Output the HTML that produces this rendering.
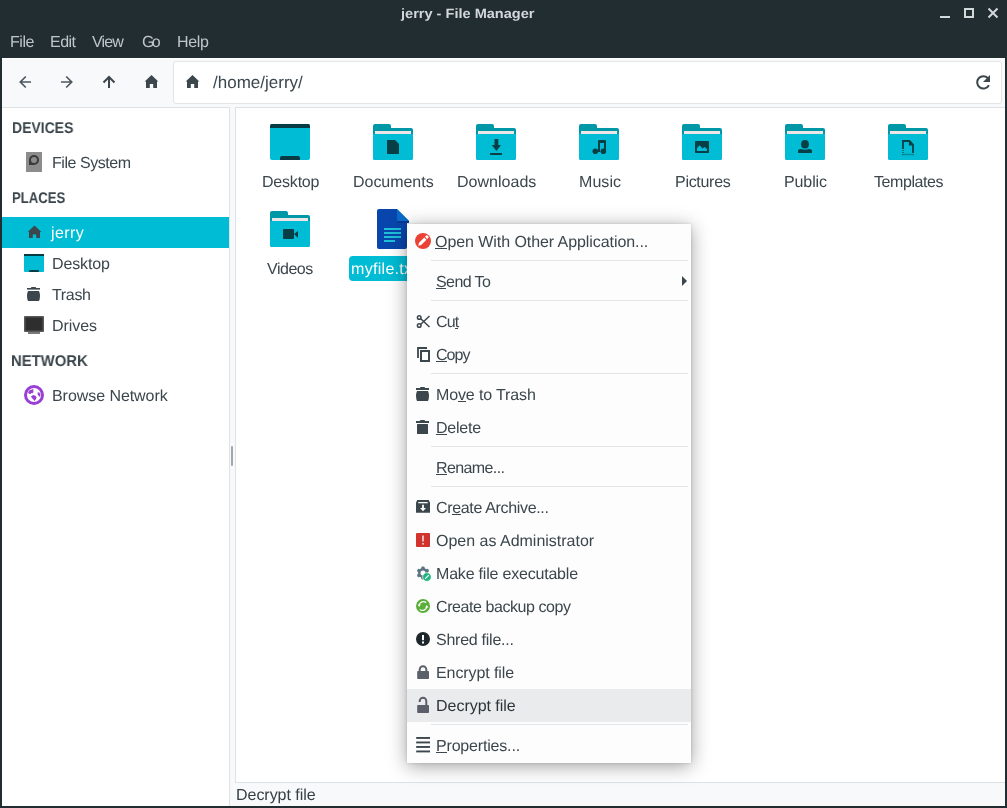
<!DOCTYPE html>
<html><head><meta charset="utf-8">
<style>
*{box-sizing:border-box;margin:0;padding:0}
html,body{width:1007px;height:808px;overflow:hidden;background:#222d32;font-family:"Liberation Sans",sans-serif;}
.t{will-change:transform;text-rendering:geometricPrecision}
.a{position:absolute}
.t{position:absolute;white-space:nowrap;line-height:20px;font-size:15px;color:#3b464d}
svg{position:absolute;overflow:visible}
u{text-decoration:none;border-bottom:1px solid currentColor;display:inline-block;line-height:11px}
</style></head><body>

<!-- title -->
<div class="t" style="left:400.69px;top:4px;font-size:13.5px;font-weight:700;color:#d3d8db;transform:scaleX(1.0784);transform-origin:0 0">jerry - File Manager</div>
<svg style="left:0;top:0" width="1007" height="30">
  <rect x="940" y="16" width="10" height="2" fill="#d3d8db"/>
  <rect x="965" y="9" width="8" height="8" fill="none" stroke="#d3d8db" stroke-width="2"/>
  <path d="M988.5 8.5 L997.5 17.5 M997.5 8.5 L988.5 17.5" stroke="#d3d8db" stroke-width="2"/>
</svg>

<!-- menubar -->
<div class="t" style="left:9.70px;top:33px;font-size:16px;color:#bfc6ca;letter-spacing:-0.460px">File</div>
<div class="t" style="left:49.70px;top:33px;font-size:16px;color:#bfc6ca;letter-spacing:-0.518px">Edit</div>
<div class="t" style="left:92.10px;top:33px;font-size:16px;color:#bfc6ca;letter-spacing:-0.838px">View</div>
<div class="t" style="left:141.80px;top:33px;font-size:16px;color:#bfc6ca;letter-spacing:-2.700px">Go</div>
<div class="t" style="left:176.80px;top:33px;font-size:16px;color:#bfc6ca;letter-spacing:-0.300px">Help</div>

<!-- toolbar -->
<div class="a" style="left:2px;top:58px;width:1003px;height:748px;background:#f8f9fa;border-top:1px solid #fff"></div>
<div class="a" style="left:173px;top:61px;width:829px;height:43px;background:#fff;border:1px solid #e4e6e6;border-radius:3px"></div>
<svg style="left:0;top:0" width="1007" height="110">
  <g stroke="#4d575d" stroke-width="1.7" fill="none">
    <path d="M31 82 H20.5 M25.8 76.5 L20.3 82 L25.8 87.5"/>
    <path d="M61 82 H71.5 M66.2 76.5 L71.7 82 L66.2 87.5"/>
  </g>
  <path d="M109 88 V77.5 M103.5 82.5 L109 77 L114.5 82.5" stroke="#3b464d" stroke-width="2" fill="none"/>
  <path d="M151.5 75 L158.3 81.5 H157 V88 H153.2 V84 H149.8 V88 H146 V81.5 H144.7 Z" fill="#3b464d"/>
  <path d="M192.5 75 L199.3 81.5 H198 V88 H194.2 V84 H190.8 V88 H187 V81.5 H185.7 Z" fill="#3b464d"/>
  <path d="M988.3 78.6 A6.2 6.2 0 1 0 988.9 85.2" stroke="#3b464d" stroke-width="2" fill="none"/>
  <path d="M990 75 V82 H983 Z" fill="#3b464d"/>
</svg>
<div class="t" style="left:213.04px;top:73px;font-size:17px;letter-spacing:0.007px">/home/jerry/</div>

<!-- sidebar -->
<div class="a" style="left:2px;top:107px;width:228px;height:699px;background:#fff;border-top:1px solid #dfe2e5;border-right:1px solid #dfe2e5"></div>
<div class="a" style="left:2px;top:217px;width:227px;height:31px;background:#00bcd4"></div>
<div class="t" style="left:11.50px;top:119px;font-size:15.5px;font-weight:700;color:#3a454b;transform:scaleX(0.9024);transform-origin:0 0">DEVICES</div>
<div class="t" style="left:51.53px;top:154px;font-size:16px;letter-spacing:-0.455px">File System</div>
<div class="t" style="left:11.53px;top:189px;font-size:15.5px;font-weight:700;color:#3a454b;transform:scaleX(0.8469);transform-origin:0 0">PLACES</div>
<div class="t" style="left:51.10px;top:224px;font-size:16px;color:#fff;letter-spacing:0.395px">jerry</div>
<div class="t" style="left:51.73px;top:255px;font-size:16px;letter-spacing:-0.124px">Desktop</div>
<div class="t" style="left:51.62px;top:286px;font-size:16px;letter-spacing:-0.323px">Trash</div>
<div class="t" style="left:51.73px;top:317px;font-size:16px;letter-spacing:-0.049px">Drives</div>
<div class="t" style="left:11.14px;top:352px;font-size:15.5px;font-weight:700;color:#3a454b;transform:scaleX(0.9571);transform-origin:0 0">NETWORK</div>
<div class="t" style="left:51.73px;top:387px;font-size:16px;letter-spacing:-0.059px">Browse Network</div>
<svg style="left:0;top:0" width="240" height="420">
  <!-- file system -->
  <rect x="26" y="152" width="16" height="20" fill="#8c8c8c"/>
  <path d="M29 160 A5 5 0 1 1 34 165 H29 Z" fill="#3a3a3a"/><circle cx="34" cy="160" r="3" fill="#8c8c8c"/>
  <!-- home -->
  <path d="M34.5 225.5 L41.3 232 H40 V238 H36.2 V234.5 H32.8 V238 H29 V232 H27.7 Z" fill="#3b464d"/>
  <!-- desktop -->
  <rect x="24" y="254" width="20" height="18" rx="1" fill="#00bcd4"/>
  <rect x="24" y="254" width="20" height="2" fill="#073c45"/>
  <rect x="29" y="270" width="10" height="2" rx="1" fill="#073c45"/>
  <!-- trash -->
  <rect x="27" y="288" width="13" height="1.6" fill="#3b464d"/>
  <rect x="31" y="287" width="5" height="1.5" rx="0.7" fill="#3b464d"/>
  <path d="M28 291 H39 Q41 296 39 301 H28 Q26 296 28 291 Z" fill="#3b464d"/>
  <!-- drives -->
  <rect x="24" y="316" width="20" height="16" rx="1" fill="#585858"/>
  <rect x="25.5" y="317.5" width="17" height="13" fill="#2e2e2e"/>
  <rect x="28" y="332" width="12" height="2" fill="#7a7a7a"/>
  <!-- globe -->
  <circle cx="34" cy="395" r="8.5" fill="#fff" stroke="#9a3fd5" stroke-width="3"/>
  <path d="M28 392.6 L29.5 390.3 L32 389.4 L33.4 389 L33.3 392.4 L32.4 393.3 L31.2 393 L30.8 394 L29 393.8 Z M31 396.2 L33.4 395 L35.8 396 L36.6 397.6 L35.8 399.4 L34.3 401 L33.4 399.4 L31.8 397.9 Z M37.6 392.6 L39 392.2 L40.4 394 L40.1 396.8 L38.9 396.2 L37.7 394.6 Z" fill="#9a3fd5"/>
</svg>

<!-- pane separator handle -->
<div class="a" style="left:231px;top:446px;width:2px;height:20px;background:#a2a7ab;border-radius:1px"></div>

<!-- main view -->
<div class="a" style="left:235px;top:107px;width:770px;height:676px;background:#fff;border-left:1px solid #dfe2e5;border-top:1px solid #dfe2e5;border-bottom:1px solid #dfe2e5"></div>

<svg style="left:0;top:0" width="1007" height="300">
  <defs>
    <g id="fold">
      <path d="M0 2 Q0 0 2 0 H16 Q18 0 18 2 V4 H38 Q40 4 40 6 V34 Q40 36 38 36 H2 Q0 36 0 34 Z" fill="#0097a7"/>
      <rect x="2" y="7" width="36" height="4" fill="#eee6e6"/>
      <path d="M0 10 H40 V34 Q40 36 38 36 H2 Q0 36 0 34 Z" fill="#00bcd4"/>
    </g>
  </defs>
  <!-- desktop -->
  <rect x="270" y="124" width="40" height="36" rx="2" fill="#00bcd4"/>
  <path d="M270 128 V126 Q270 124 272 124 H308 Q310 124 310 126 V128 Z" fill="#073c45"/>
  <path d="M280 160 V158 Q280 156 282 156 H298 Q300 156 300 158 V160 Z" fill="#073c45"/>
  <!-- documents -->
  <use href="#fold" x="373" y="124"/>
  <path d="M387 140 H395 L399 144 V154 H387 Z" fill="#073f47"/>
  <!-- downloads -->
  <use href="#fold" x="476" y="124"/>
  <path d="M494.5 139 H498.3 V145 H501 L496.4 151 L491.7 145 H494.5 Z" fill="#073f47"/>
  <rect x="490" y="153" width="12" height="2" fill="#073f47"/>
  <!-- music -->
  <use href="#fold" x="579" y="124"/>
  <path d="M598 152 V141 Q598 140 599 140 H605 Q606 140 606 141 V151 H604 V143 H600 V152 Z" fill="#073f47"/>
  <circle cx="595.3" cy="151.3" r="2.8" fill="#073f47"/><circle cx="603.3" cy="151.3" r="2.8" fill="#073f47"/>
  <!-- pictures -->
  <use href="#fold" x="682" y="124"/>
  <rect x="695" y="141" width="14" height="12" rx="0.8" fill="#073f47"/>
  <path d="M697 151 V148 L699.5 145.3 L702.5 148.5 L704.5 147 L707 149 V151 Z" fill="#00bcd4"/>
  <!-- public -->
  <use href="#fold" x="785" y="124"/>
  <ellipse cx="805" cy="144.3" rx="3.9" ry="4.3" fill="#073f47"/>
  <path d="M798 153 V151 Q798 149.2 801 149 Q805 150.5 809 149 Q812 149.2 812 151 V153 Z" fill="#073f47"/>
  <!-- templates -->
  <use href="#fold" x="888" y="124"/>
  <path d="M903 149 V141 H909.5 L913 144.5 V153" fill="none" stroke="#073f47" stroke-width="1.8"/>
  <path d="M909.5 141 V144.8 H913" fill="#073f47" stroke="#073f47" stroke-width="1.2"/>
  <path d="M903 150 V154.5 H913 V153" fill="none" stroke="#073f47" stroke-width="1.6" stroke-dasharray="1 1" opacity="0.75"/>
  <!-- videos -->
  <use href="#fold" x="270" y="211"/>
  <rect x="283" y="229" width="11" height="10" rx="1" fill="#073f47"/>
  <path d="M294 234 L298 231 V238 Z" fill="#073f47"/>
  <!-- myfile.txt -->
  <path d="M377 211 Q377 209 379 209 H397 L409 221 V223 H407 V247 Q407 249 405 249 H379 Q377 249 377 247 Z" fill="#0846ad"/>
  <rect x="397" y="221" width="12" height="2" fill="#073a94"/>
  <path d="M397 209 L409 221 H397 Z" fill="#0a6acb"/>
  <rect x="384" y="228" width="17" height="2" fill="#1ec0da"/>
  <rect x="384" y="232" width="17" height="2" fill="#1ec0da"/>
  <rect x="384" y="236" width="17" height="2" fill="#1ec0da"/>
  <rect x="384" y="240" width="11" height="2" fill="#1ec0da"/>
</svg>

<div class="t" style="left:262.03px;top:173px;font-size:16px;letter-spacing:-0.206px">Desktop</div>
<div class="t" style="left:353.43px;top:173px;font-size:16px;letter-spacing:-0.036px">Documents</div>
<div class="t" style="left:456.83px;top:173px;font-size:16px;letter-spacing:0.026px">Downloads</div>
<div class="t" style="left:578.93px;top:173px;font-size:16px;letter-spacing:0.061px">Music</div>
<div class="t" style="left:674.63px;top:173px;font-size:16px;letter-spacing:-0.293px">Pictures</div>
<div class="t" style="left:783.63px;top:173px;font-size:16px;letter-spacing:-0.109px">Public</div>
<div class="t" style="left:873.52px;top:173px;font-size:16px;letter-spacing:-0.437px">Templates</div>
<div class="t" style="left:266.57px;top:260px;font-size:16px;letter-spacing:-0.473px">Videos</div>
<div class="a" style="left:349px;top:256px;width:80px;height:25px;background:#00bcd4;border-radius:4px"></div>
<div class="t" style="left:350.60px;top:260px;font-size:16px;color:#fff;letter-spacing:0.300px">myfile.txt</div>

<!-- status bar -->
<div class="t" style="left:235.52px;top:786px;font-size:16px;color:#343e43;letter-spacing:-0.033px">Decrypt file</div>

<!-- context menu -->
<div class="a" style="left:407px;top:224px;width:284px;height:539px;background:#fdfdfd;box-shadow:0 3px 18px rgba(0,0,0,0.38), 0 0 3px rgba(0,0,0,0.15)"></div>
<div class="a" style="left:407px;top:689px;width:284px;height:33px;background:#e9ebed"></div>
<div class="a" style="left:431px;top:260px;width:257px;height:1px;background:#e3e5e8"></div>
<div class="a" style="left:431px;top:300px;width:257px;height:1px;background:#e3e5e8"></div>
<div class="a" style="left:431px;top:373px;width:257px;height:1px;background:#e3e5e8"></div>
<div class="a" style="left:431px;top:446px;width:257px;height:1px;background:#e3e5e8"></div>
<div class="a" style="left:431px;top:486px;width:257px;height:1px;background:#e3e5e8"></div>
<div class="a" style="left:431px;top:724px;width:257px;height:1px;background:#e3e5e8"></div>
<div class="t" style="left:435.40px;top:233px;font-size:16px;letter-spacing:-0.066px"><u>O</u>pen With Other Application...</div>
<div class="t" style="left:435.57px;top:273px;font-size:16px;letter-spacing:-0.601px"><u>S</u>end To</div>
<div class="t" style="left:436.10px;top:313px;font-size:16px;letter-spacing:-0.837px">Cu<u>t</u></div>
<div class="t" style="left:436.10px;top:346px;font-size:16px;letter-spacing:-0.956px"><u>C</u>opy</div>
<div class="t" style="left:436.10px;top:386px;font-size:16px;letter-spacing:-0.128px">Mo<u>v</u>e to Trash</div>
<div class="t" style="left:436.10px;top:419px;font-size:16px;letter-spacing:-0.238px"><u>D</u>elete</div>
<div class="t" style="left:435.90px;top:459px;font-size:16px;letter-spacing:-0.614px"><u>R</u>ename...</div>
<div class="t" style="left:436.10px;top:499px;font-size:16px;letter-spacing:-0.338px">Cr<u>e</u>ate Archive...</div>
<div class="t" style="left:435.70px;top:532px;font-size:16px;letter-spacing:-0.009px">Open as Administrator</div>
<div class="t" style="left:436.10px;top:565px;font-size:16px;letter-spacing:-0.199px">Make file executable</div>
<div class="t" style="left:436.10px;top:598px;font-size:16px;letter-spacing:-0.427px">Create backup copy</div>
<div class="t" style="left:436.07px;top:631px;font-size:16px;letter-spacing:-0.257px">Shred file...</div>
<div class="t" style="left:436.10px;top:664px;font-size:16px;letter-spacing:-0.095px">Encrypt file</div>
<div class="t" style="left:435.81px;top:697px;font-size:16px;color:#2b3439;letter-spacing:-0.025px">Decrypt file</div>
<div class="t" style="left:436.10px;top:737px;font-size:16px;letter-spacing:-0.181px"><u>P</u>roperties...</div>
<svg style="left:0;top:0" width="1007" height="808">
  <!-- open with: red circle with pencil -->
  <circle cx="423" cy="241" r="8" fill="#ea4335"/>
  <path d="M418.2 245.8 L419 242.8 L424.3 237.5 L426.5 239.7 L421.2 245 Z M425 236.8 L426.2 235.6 Q426.8 235 427.4 235.6 L428.4 236.6 Q429 237.2 428.4 237.8 L427.2 239 Z" fill="#fff"/>
  <!-- submenu arrow -->
  <path d="M682 276 L687 281 L682 286 Z" fill="#3b464d"/>
  <!-- cut -->
  <g stroke="#3b464d" stroke-width="1.5" fill="none">
    <circle cx="419.2" cy="317.5" r="1.8"/>
    <circle cx="419.2" cy="325.5" r="1.8"/>
    <path d="M420.8 318.8 L429.5 327 M420.8 324.2 L429.5 316"/>
  </g>
  <!-- copy -->
  <path d="M418 358 V348 H427" stroke="#3b464d" stroke-width="1.8" fill="none"/>
  <rect x="421" y="351" width="8" height="10" stroke="#3b464d" stroke-width="2" fill="none"/>
  <!-- move to trash -->
  <rect x="416" y="388" width="13" height="2" fill="#3b464d"/>
  <rect x="420" y="387" width="5" height="1.6" rx="0.8" fill="#3b464d"/>
  <path d="M417 391 H428 Q430 396 428 401 H417 Q415 396 417 391 Z" fill="#3b464d"/>
  <!-- delete -->
  <rect x="416" y="421" width="13" height="2" fill="#3b464d"/>
  <rect x="420" y="420" width="5" height="1.6" rx="0.8" fill="#3b464d"/>
  <rect x="417" y="424" width="11" height="10" rx="0.6" fill="#3b464d"/>
  <!-- archive -->
  <path d="M417.3 500 H428.7 L430 502.5 V512.2 Q430 512.7 429.5 512.7 H416.5 Q416 512.7 416 512.2 V502.5 Z" fill="#3b464d"/>
  <rect x="418.3" y="502" width="9.4" height="1.3" fill="#f8f9fa"/>
  <path d="M422.1 504.8 H423.9 V508 H426 L423 511.2 L420 508 H422.1 Z" fill="#fff"/>
  <!-- admin -->
  <rect x="416" y="533" width="14" height="14" rx="1" fill="#d0342c"/>
  <rect x="422.2" y="535.5" width="1.6" height="6" fill="#f0dcdc"/>
  <rect x="422.2" y="543" width="1.6" height="1.6" fill="#f0dcdc"/>
  <!-- gear -->
  <g fill="#5d7583">
    <circle cx="423" cy="573" r="5"/>
    <rect x="421.3" y="566.6" width="3.4" height="12.8" rx="1.2"/>
    <rect x="421.3" y="566.6" width="3.4" height="12.8" rx="1.2" transform="rotate(60 423 573)"/>
    <rect x="421.3" y="566.6" width="3.4" height="12.8" rx="1.2" transform="rotate(120 423 573)"/>
  </g>
  <circle cx="423" cy="573" r="2.5" fill="#fdfdfd"/>
  <circle cx="426.9" cy="577" r="4.3" fill="#1fb57f" stroke="#fdfdfd" stroke-width="0.6"/>
  <path d="M425.1 578.8 L428.7 575.2" stroke="#fff" stroke-width="1.2"/>
  <!-- backup -->
  <circle cx="423" cy="606" r="7" fill="#5aaf3a"/>
  <path d="M426.2 602.6 A4.3 4.3 0 0 0 419.2 605.2 M419.8 609.4 A4.3 4.3 0 0 0 426.8 606.8" stroke="#fff" stroke-width="1.2" fill="none"/>
  <path d="M417.6 604.6 L420.8 604.6 L419.2 607 Z M425.2 607.4 L428.4 607.4 L426.8 605 Z" fill="#fff"/>
  <!-- shred -->
  <circle cx="423" cy="639" r="7" fill="#1d262b"/>
  <rect x="422" y="635" width="2" height="5.2" fill="#fff"/>
  <rect x="422" y="641.5" width="2" height="2" fill="#fff"/>
  <!-- encrypt -->
  <path d="M419.7 671.5 V669.5 A3.3 3.3 0 0 1 426.3 669.5 V671.5" stroke="#5a5f6a" stroke-width="2" fill="none"/>
  <rect x="417.2" y="671" width="11.8" height="8" rx="0.8" fill="#5a5f6a"/>
  <!-- decrypt -->
  <path d="M419.7 702 V701 A3.3 3.3 0 0 1 426.3 701 V705.5" stroke="#5a5f6a" stroke-width="2" fill="none"/>
  <rect x="417.2" y="705" width="11.8" height="8" rx="0.8" fill="#5a5f6a"/>
  <!-- properties -->
  <g fill="#3b464d">
    <rect x="416.2" y="737" width="13.8" height="1.9"/>
    <rect x="416.2" y="741.5" width="13.8" height="1.9"/>
    <rect x="416.2" y="746" width="13.8" height="1.9"/>
    <rect x="416.2" y="750.5" width="13.8" height="1.9"/>
  </g>
</svg>
</body></html>
